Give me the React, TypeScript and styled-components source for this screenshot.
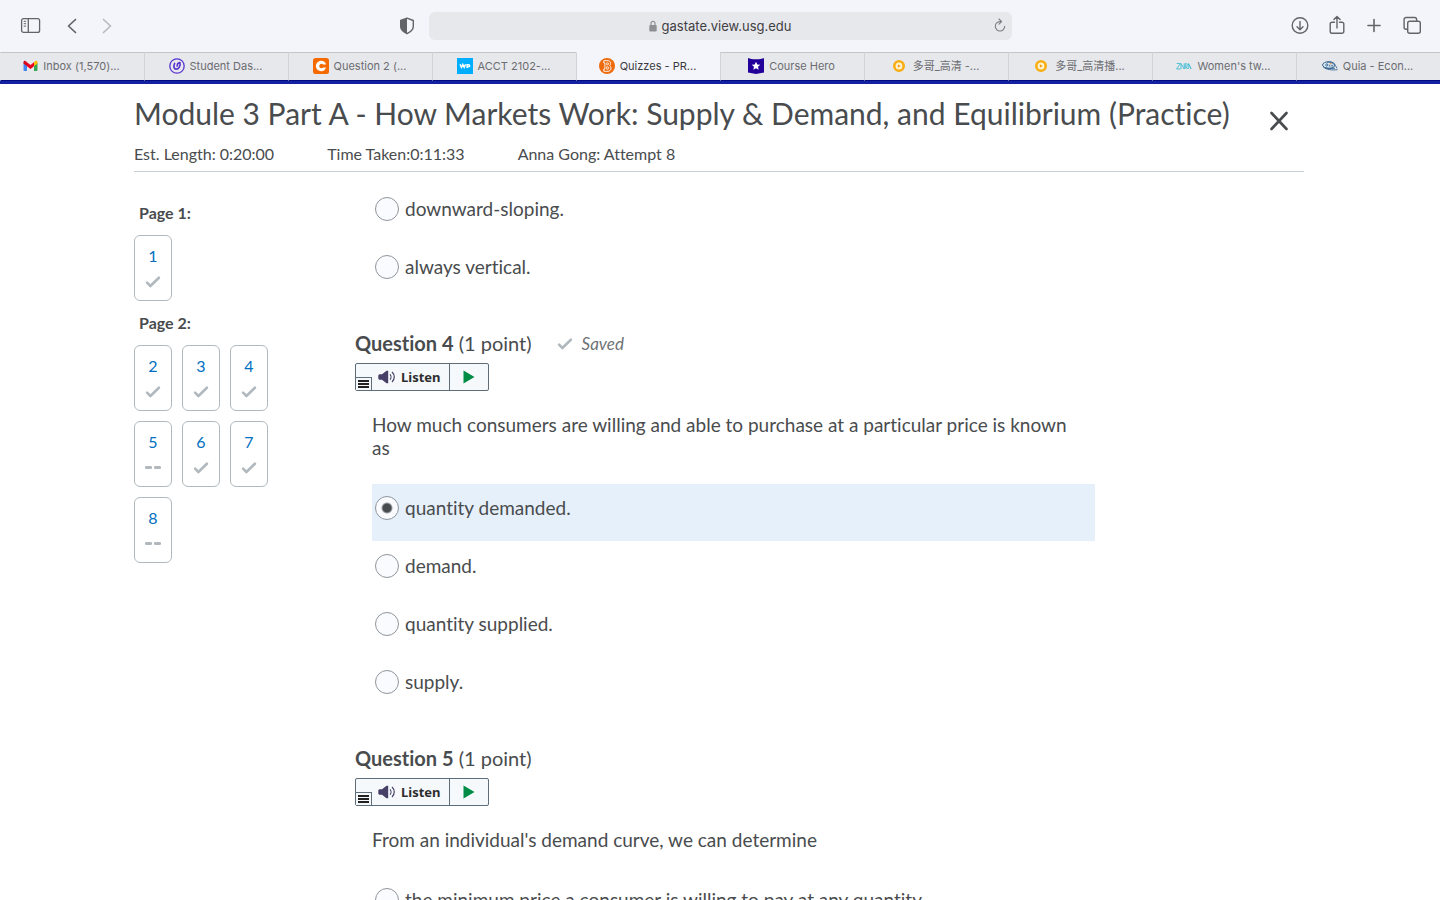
import React, { useState } from "react";
import styled, { createGlobalStyle, css } from "styled-components";

const GlobalStyle = createGlobalStyle`
  *, *::before, *::after { box-sizing: border-box; }
  body {
    margin: 0;
    background: #ffffff;
    color: #494c4e;
    font-family: Lato, "Liberation Sans", sans-serif;
    font-variant-ligatures: none;
  }
  button, input { font: inherit; color: inherit; }
`;

const uiFont = `Inter, "Liberation Sans", "Noto Sans CJK SC", sans-serif`;

const Window = styled.div`
  display: flex;
  flex-direction: column;
  height: 100vh;
  overflow: hidden;
`;

/* ---------- browser chrome ---------- */

const Toolbar = styled.header`
  display: grid;
  grid-template-columns: minmax(0, 1fr) minmax(0, 583px) minmax(0, 1fr);
  align-items: center;
  height: 52px;
  flex: none;
  background: #f4f5fa;
  color: #636468;
  font-family: ${uiFont};
`;

const ToolGroup = styled.div<{ $side: "left" | "right" }>`
  display: flex;
  align-items: center;
  padding: ${(p) => (p.$side === "left" ? "0 13px 0 19px" : "0 16px 0 0")};
  justify-content: ${(p) => (p.$side === "left" ? "flex-start" : "flex-end")};
  gap: ${(p) => (p.$side === "left" ? "18px" : "15px")};
`;

const IconButton = styled.button<{ $dim?: boolean; $push?: boolean }>`
  display: flex;
  padding: 0;
  border: 0;
  background: none;
  color: ${(p) => (p.$dim ? "#b9babe" : "inherit")};
  ${(p) => p.$push && css`margin-left: auto;`}
  svg { display: block; }
`;

const AddressBar = styled.div`
  display: grid;
  grid-template-columns: 24px 1fr 24px;
  align-items: center;
  height: 28px;
  border-radius: 6px;
  background: #e7e8ec;
`;

const Address = styled.div`
  grid-column: 2;
  display: flex;
  align-items: center;
  justify-content: center;
  gap: 5px;
  color: #3f4043;
  font-size: 13px;
  line-height: 16px;
`;

const TabStrip = styled.nav`
  display: flex;
  flex: none;
  height: 32px;
  border-bottom: 3px solid #1420a2;
  background: #e7e8ec;
  font-family: ${uiFont};
`;

const Tab = styled.a<{ $active?: boolean }>`
  display: flex;
  flex: 1 1 0;
  min-width: 0;
  align-items: center;
  justify-content: center;
  gap: 5px;
  padding: 0 2px 1px 0;
  border-top: 1px solid ${(p) => (p.$active ? "#f4f5fa" : "#c3c4c8")};
  border-left: 1px solid #d2d3d7;
  border-bottom: 1px solid #000a80;
  background: ${(p) => (p.$active ? "#f4f5fa" : "#e7e8ec")};
  color: ${(p) => (p.$active ? "#3a3b3e" : "#6b6c70")};
  font-size: 11px;
  line-height: 16px;
  text-decoration: none;
  white-space: nowrap;
  &:first-child { border-left-color: transparent; }
  svg { flex: none; }
`;

/* ---------- quiz page ---------- */

const Page = styled.div`
  display: flex;
  flex-direction: column;
  flex: 1;
  min-height: 0;
  width: 100%;
  max-width: 1232px;
  margin: 0 auto;
  padding: 0 32px 0 30px;
`;

const QuizHeader = styled.header`
  flex: none;
  padding: 10px 0 7px;
  border-bottom: 1px solid #c4d0d9;
`;

const TitleRow = styled.div`
  display: flex;
  align-items: center;
  justify-content: space-between;
  padding-right: 15px;
`;

const Title = styled.h1`
  margin: 0;
  font-size: 30px;
  line-height: 38px;
  font-weight: 400;
`;

const CloseButton = styled(IconButton)`
  color: #494c4e;
  padding-top: 16px;
`;

const Meta = styled.div`
  display: flex;
  gap: 53px;
  margin-top: 12px;
  font-size: 16px;
  line-height: 20px;
`;

const Body = styled.div`
  display: flex;
  flex: 1;
  min-height: 0;
  overflow: hidden;
`;

const Sidebar = styled.nav`
  display: flex;
  flex-direction: column;
  flex: none;
  gap: 12px;
  width: 221px;
  padding-top: 31px;
`;

const PageLabel = styled.h2`
  margin: 0;
  padding-left: 5px;
  font-size: 16px;
  line-height: 20px;
  font-weight: 700;
`;

const Tiles = styled.div`
  display: grid;
  grid-template-columns: repeat(3, 38px);
  gap: 10px;
`;

const Tile = styled.a`
  display: flex;
  flex-direction: column;
  align-items: center;
  gap: 9px;
  height: 66px;
  padding-top: 10px;
  border: 1px solid #b1b9be;
  border-radius: 6px;
  color: #006fbf;
  font-size: 16px;
  line-height: 20px;
  text-decoration: none;
`;

const Questions = styled.main`
  flex: 1;
  min-width: 0;
  max-width: 740px;
  padding-top: 12px;
`;

const Question = styled.section`
  padding-bottom: 32px;
`;

const QuestionHead = styled.div`
  display: flex;
  align-items: center;
  gap: 25px;
`;

const QuestionTitle = styled.h2`
  margin: 0;
  font-size: 20px;
  line-height: 23px;
  font-weight: 400;
`;

const Saved = styled.span`
  display: flex;
  align-items: center;
  gap: 9px;
  color: #6e7376;
  font-size: 17px;
  line-height: 20px;
  font-style: italic;
`;

const ListenBar = styled.div`
  display: flex;
  width: 134px;
  height: 28px;
  margin-top: 8px;
  border: 1px solid #5f6d78;
  border-radius: 2px;
  background: #f5f9fc;
`;

const ListenMenu = styled.button`
  display: flex;
  align-self: flex-end;
  width: 16px;
  height: 13px;
  padding: 1px 0 0 2px;
  border: 1px solid #5f6d78;
  border-width: 1px 1px 0 0;
  background: #f5f9fc;
`;

const ListenButton = styled.button`
  display: flex;
  flex: 1;
  align-items: center;
  gap: 5px;
  padding: 0 0 0 6px;
  border: 0;
  border-right: 1px solid #5f6d78;
  background: none;
  color: #2d2d2d;
  font-family: "Noto Sans", "Open Sans", sans-serif;
  font-size: 13px;
  line-height: 18px;
  font-weight: 700;
`;

const PlayButton = styled.button`
  display: flex;
  align-items: center;
  justify-content: center;
  width: 38px;
  padding: 0;
  border: 0;
  background: none;
`;

const Prompt = styled.p`
  margin: 22px 0 24px 17px;
  padding-right: 8px;
  font-size: 19px;
  line-height: 23px;
`;

const Answers = styled.div`
  margin-left: 17px;
`;

const Answer = styled.label<{ $selected: boolean }>`
  display: flex;
  align-items: flex-start;
  gap: 6px;
  height: 58px;
  padding: 12px 3px 0;
  border-top: 1px solid transparent;
  background: ${(p) => (p.$selected ? "#e6f0fb" : "transparent")};
  background-clip: padding-box;
  font-size: 19px;
  line-height: 24px;
`;

const Radio = styled.input`
  appearance: none;
  flex: none;
  width: 24px;
  height: 24px;
  margin: 0;
  border: 1px solid #8f959a;
  border-radius: 50%;
  background: #f9fbff;
  &:checked {
    background: radial-gradient(circle, #494c4e 4px, #f9fbff 6px);
  }
`;

/* ---------- drawings ---------- */

const Check = () => (
  <svg width="16" height="14" viewBox="0 0 16 14" fill="none" stroke="#b1b9be" strokeWidth="2.6" strokeLinecap="round" strokeLinejoin="round" aria-hidden="true">
    <path d="M2.100 7.700 5.400 11 13.900 2.700" />
  </svg>
);

const Dashes = () => (
  <svg width="16" height="14" viewBox="0 0 16 14" fill="#b1b9be" aria-hidden="true">
    <rect x="0" y="5" width="7" height="3" rx="1.2" />
    <rect x="9" y="5" width="7" height="3" rx="1.2" />
  </svg>
);

const GmailIcon = () => (
  <svg width="15" height="16" viewBox="0 0 15 16" aria-hidden="true">
    <path d="M0.5 4.5V12a1 1 0 0 0 1 1H4V7.5z" fill="#4285f4" />
    <path d="M14.5 4.5V12a1 1 0 0 1-1 1H11V7.5z" fill="#34a853" />
    <path d="M11 4.2 12.2 3.200c1-.8 2.300-.1 2.300 1.100V5.600L11 8.200z" fill="#fbbc04" />
    <path d="M4 4.200 7.500 6.900 11 4.200v4L7.500 10.900 4 8.200z" fill="#ea0020" />
    <path d="M.5 5.600V4.300c0-1.200 1.300-1.900 2.300-1.100L4 4.200v4z" fill="#d8061c" />
  </svg>
);

const StudentIcon = () => (
  <svg width="16" height="16" viewBox="0 0 16 16" fill="none" stroke="#5a35d0" aria-hidden="true">
    <circle cx="8" cy="8" r="7.200" strokeWidth="1.300" />
    <path d="M5.600 5.500C4.300 8.500 4.900 11.200 7.200 11.200c2.500 0 4.500-3.500 3.700-6.700L8.700 5.600 8.100 8" strokeWidth="1.700" strokeLinecap="round" strokeLinejoin="round" />
  </svg>
);

const CheggIcon = () => (
  <svg width="16" height="16" viewBox="0 0 16 16" aria-hidden="true">
    <rect width="16" height="16" rx="2.500" fill="#f56a00" />
    <path d="M13 6.500h-3C9.600 5.900 9 5.700 8.400 5.700 7.100 5.700 6.300 6.700 6.300 8s.8 2.300 2.100 2.300c.7 0 1.200-.2 1.600-.8h3c-.6 2.400-2.400 3.700-4.600 3.700C5.300 13.200 2.900 10.900 2.900 8s2.400-5.200 5.500-5.200c2.300 0 4 1.300 4.600 3.700z" fill="#fff" />
  </svg>
);

const WileyIcon = () => (
  <svg width="16" height="16" viewBox="0 0 16 16" aria-hidden="true">
    <rect width="16" height="16" fill="#00aeff" />
    <g fill="none" stroke="#fff" strokeWidth="1.400">
      <path d="M3 6.200 4.400 9.400 5.800 6.400 7.200 9.400 8.600 6.200" />
      <path d="M10.100 10V6.700h1.500a1.100 1.100 0 0 1 0 2.200h-1.500" />
    </g>
  </svg>
);

const BrightspaceIcon = () => (
  <svg width="16" height="16" viewBox="0 0 16 16" aria-hidden="true">
    <circle cx="8" cy="8" r="8" fill="#ed6b0c" />
    <g fill="none" stroke="#fff" strokeLinejoin="round">
      <path d="M4.800 2.700H9c2.700 0 3.300 3.300 1.700 4.900 2.200 1.600 1.500 5.700-1.700 5.700H4.800V11h1.100V5H4.800z" strokeWidth=".9" />
      <path d="M7.700 4.800h1c1.200 0 1.200 2 0 2h-1zM7.700 8.800h1.200c1.300 0 1.300 2.400 0 2.400H7.700z" strokeWidth=".8" />
    </g>
  </svg>
);

const CourseHeroIcon = () => (
  <svg width="16" height="16" viewBox="0 0 16 16" aria-hidden="true">
    <path d="M0 0c2 1 4.500 1.300 8 1.300S14 1 16 0v14.500L8 16 0 14.500z" fill="#220099" />
    <path d="m8 3.700 1.300 2.800 3 .3-2.300 2 .7 3L8 10.300l-2.700 1.500.7-3-2.300-2 3-.3z" fill="#fff" />
  </svg>
);

const VideoIcon = () => (
  <svg width="16" height="16" viewBox="0 0 16 16" aria-hidden="true">
    <ellipse cx="7" cy="8" rx="4.700" ry="4.800" fill="#fff3cf" stroke="#f8ae12" strokeWidth="2.600" />
    <path d="m5.900 6.200 2.700 1.800-2.700 1.800z" fill="#f39a14" />
  </svg>
);

const ZaraIcon = () => (
  <svg width="16" height="16" viewBox="0 0 16 16" fill="none" stroke="#40bcd2" aria-hidden="true">
    <path d="M.7 5.500h3.600L.6 11h4M5 11V5.500L8.200 11V5.500M9.200 11V5.500c3 0 2.300 2.600.4 2.600L11.500 11M12.200 11V5.500" strokeWidth=".9" />
    <path d="m12.300 5.500 2.900 5.500" strokeWidth="1.200" />
  </svg>
);

const QuiaIcon = () => (
  <svg width="16" height="16" viewBox="0 0 16 16" fill="none" aria-hidden="true">
    <ellipse cx="6.800" cy="7" rx="6.200" ry="3.300" stroke="#2f608e" strokeWidth="1" fill="#dce8f2" />
    <path d="M1 8.500c3 3.500 9 3.700 14.500 3.200M5 4.300c4-.8 8 1.500 10 6M3 9.700c3 .8 6 .9 10 .6" stroke="#2f608e" strokeWidth=".9" />
    <path d="M4 6.200c-1 2 1.500 2.500 1.700.9S4.500 5.600 4 6.200M7.300 6.700v1.700M9 8.700c0-2 2-2 2 0" stroke="#2f608e" strokeWidth=".9" />
    <circle cx="8.700" cy="5.600" r=".9" fill="#e59a4a" />
  </svg>
);

const Speaker = () => (
  <svg width="18" height="14" viewBox="0 0 18 14" aria-hidden="true">
    <path d="M1.500 4.200H4L8.500.8h1.700v12.400H8.500L4 9.800H1.500A1.500 1.500 0 0 1 .3 8.500v-3A1.500 1.500 0 0 1 1.500 4.200z" fill="#463f68" />
    <path d="M12 4.300c1.300 1.400 1.300 4 0 5.400M14 2c3 2.700 3 7.300 0 10" fill="none" stroke="#463f68" strokeWidth="1.200" />
  </svg>
);

/* ---------- data ---------- */

const tabs = [
  { label: "Inbox (1,570)...", Icon: GmailIcon },
  { label: "Student Das...", Icon: StudentIcon },
  { label: "Question 2 (...", Icon: CheggIcon },
  { label: "ACCT 2102-...", Icon: WileyIcon },
  { label: "Quizzes - PR...", Icon: BrightspaceIcon, active: true },
  { label: "Course Hero", Icon: CourseHeroIcon },
  { label: "多哥_高清 -...", Icon: VideoIcon },
  { label: "多哥_高清播...", Icon: VideoIcon },
  { label: "Women's tw...", Icon: ZaraIcon },
  { label: "Quia - Econ...", Icon: QuiaIcon },
];

const quizPages = [
  { name: "Page 1:", items: [{ n: 1, saved: true }] },
  {
    name: "Page 2:",
    items: [2, 3, 4, 5, 6, 7, 8].map((n) => ({ n, saved: n !== 5 && n !== 8 })),
  },
];

/* ---------- parts ---------- */

function AnswerList({ name, options, initial }: { name: string; options: string[]; initial?: string }) {
  const [value, setValue] = useState(initial);
  return (
    <Answers role="radiogroup" aria-label={name}>
      {options.map((option) => (
        <Answer key={option} $selected={option === value}>
          <Radio type="radio" name={name} checked={option === value} onChange={() => setValue(option)} />
          {option}
        </Answer>
      ))}
    </Answers>
  );
}

function Listen() {
  return (
    <ListenBar>
      <ListenMenu aria-label="Reader menu">
        <svg width="11" height="10" viewBox="0 0 11 10" fill="#222" aria-hidden="true">
          <path d="M0 1h11v2H0zM0 4h11v2H0zM0 7h11v2H0z" />
        </svg>
      </ListenMenu>
      <ListenButton>
        <Speaker />
        Listen
      </ListenButton>
      <PlayButton aria-label="Play">
        <svg width="12" height="14" viewBox="0 0 12 14" aria-hidden="true">
          <path d="M.5.500 11.500 7 .5 13.500z" fill="#008c45" />
        </svg>
      </PlayButton>
    </ListenBar>
  );
}

export default function App() {
  return (
    <Window>
      <GlobalStyle />
      <Toolbar>
        <ToolGroup $side="left">
          <IconButton aria-label="Sidebar">
            <svg width="24" height="20" viewBox="0 0 24 20" fill="none" stroke="currentColor" strokeWidth="1.300">
              <rect x="2.600" y="2.600" width="18" height="13.800" rx="2" />
              <path d="M9.300 2.600v13.800" />
              <path d="M4.700 5.300h2.400M4.700 7.700h2.400M4.700 10.100h2.400" strokeWidth="1" />
            </svg>
          </IconButton>
          <IconButton aria-label="Back">
            <svg width="22" height="20" viewBox="0 0 22 20" fill="none" stroke="currentColor" strokeWidth="1.700" strokeLinecap="round" strokeLinejoin="round">
              <path d="M14.500 3.500 7.500 10l7 6.500" />
            </svg>
          </IconButton>
          <IconButton aria-label="Forward" $dim>
            <svg width="14" height="20" viewBox="0 0 14 20" fill="none" stroke="currentColor" strokeWidth="1.700" strokeLinecap="round" strokeLinejoin="round">
              <path d="M2.500 3.500 9.500 10l-7 6.500" />
            </svg>
          </IconButton>
          <IconButton aria-label="Privacy report" $push>
            <svg width="18" height="20" viewBox="0 0 18 20">
              <path d="M9 2.200 15.300 4.500v6c0 3.200-2.600 5.300-6.300 7.200-3.700-1.900-6.300-4-6.300-7.200v-6z" fill="none" stroke="currentColor" strokeWidth="1.400" strokeLinejoin="round" />
              <path d="M9 2.200v15.500c-3.700-1.900-6.300-4-6.300-7.200v-6z" fill="currentColor" />
            </svg>
          </IconButton>
        </ToolGroup>
        <AddressBar>
          <Address>
            <svg width="8" height="12" viewBox="0 0 8 12" aria-hidden="true">
              <path d="M2 6V3.300a2 2 0 0 1 4 0V6" fill="none" stroke="#8f9094" strokeWidth="1.200" />
              <rect x=".3" y="5" width="7.400" height="6.500" rx="1" fill="#8f9094" />
            </svg>
            gastate.view.usg.edu
          </Address>
          <IconButton aria-label="Reload">
            <svg width="24" height="20" viewBox="0 0 24 20" fill="none" stroke="#7b7c80" strokeWidth="1.100" strokeLinecap="round" strokeLinejoin="round">
              <path d="M13.500 5.600H12A4.700 4.700 0 1 0 16.700 10.300M11 3l2.600 2.600L11 8.200" />
            </svg>
          </IconButton>
        </AddressBar>
        <ToolGroup $side="right">
          <IconButton aria-label="Downloads">
            <svg width="22" height="22" viewBox="0 0 22 22" fill="none" stroke="currentColor" strokeWidth="1.400" strokeLinecap="round" strokeLinejoin="round">
              <circle cx="11" cy="10.500" r="7.800" />
              <path d="M11 6.500v8M8 11.700l3 3 3-3" />
            </svg>
          </IconButton>
          <IconButton aria-label="Share">
            <svg width="22" height="22" viewBox="0 0 22 22" fill="none" stroke="currentColor" strokeWidth="1.400" strokeLinecap="round" strokeLinejoin="round">
              <path d="M8.500 7.200H6A1.800 1.800 0 0 0 4.200 9v7.500A1.800 1.800 0 0 0 6 18.300h10a1.800 1.800 0 0 0 1.800-1.800V9A1.800 1.800 0 0 0 16 7.200h-2.500M11 13V1.500M7.900 4.500l3.100-3 3.100 3" />
            </svg>
          </IconButton>
          <IconButton aria-label="New tab">
            <svg width="22" height="22" viewBox="0 0 22 22" fill="none" stroke="currentColor" strokeWidth="1.600" strokeLinecap="round">
              <path d="M11 4.500v12M5 10.500h12" />
            </svg>
          </IconButton>
          <IconButton aria-label="Tab overview">
            <svg width="24" height="22" viewBox="0 0 24 22" fill="none" stroke="currentColor" strokeWidth="1.400" strokeLinejoin="round">
              <rect x="7.700" y="6.300" width="12.600" height="12" rx="2" />
              <path d="M7.700 14.300H6.100a2 2 0 0 1-2-2V4.500a2 2 0 0 1 2-2h8.500a2 2 0 0 1 2 2v1.800" />
            </svg>
          </IconButton>
        </ToolGroup>
      </Toolbar>

      <TabStrip aria-label="Tabs">
        {tabs.map(({ label, Icon, active }) => (
          <Tab key={label} href="#" $active={active}>
            <Icon />
            {label}
          </Tab>
        ))}
      </TabStrip>

      <Page>
        <QuizHeader>
          <TitleRow>
            <Title>Module 3 Part A - How Markets Work: Supply &amp; Demand, and Equilibrium (Practice)</Title>
            <CloseButton aria-label="Close">
              <svg width="20" height="20" viewBox="0 0 20 20" fill="none" stroke="currentColor" strokeWidth="2.600" strokeLinecap="round">
                <path d="M2.500 2 17.500 18M17.500 2 2.500 18" />
              </svg>
            </CloseButton>
          </TitleRow>
          <Meta>
            <span>Est. Length: 0:20:00</span>
            <span>Time Taken:0:11:33</span>
            <span>Anna Gong: Attempt 8</span>
          </Meta>
        </QuizHeader>

        <Body>
          <Sidebar aria-label="Quiz pages">
            {quizPages.map((page) => (
              <React.Fragment key={page.name}>
                <PageLabel>{page.name}</PageLabel>
                <Tiles>
                  {page.items.map((item) => (
                    <Tile key={item.n} href="#">
                      {item.n}
                      {item.saved ? <Check /> : <Dashes />}
                    </Tile>
                  ))}
                </Tiles>
              </React.Fragment>
            ))}
          </Sidebar>

          <Questions>
            <Question>
              <AnswerList name="Question 3" options={["downward-sloping.", "always vertical."]} />
            </Question>

            <Question>
              <QuestionHead>
                <QuestionTitle><b>Question 4</b> (1 point)</QuestionTitle>
                <Saved><Check />Saved</Saved>
              </QuestionHead>
              <Listen />
              <Prompt>How much consumers are willing and able to purchase at a particular price is known as</Prompt>
              <AnswerList
                name="Question 4"
                options={["quantity demanded.", "demand.", "quantity supplied.", "supply."]}
                initial="quantity demanded."
              />
            </Question>

            <Question>
              <QuestionHead>
                <QuestionTitle><b>Question 5</b> (1 point)</QuestionTitle>
              </QuestionHead>
              <Listen />
              <Prompt>From an individual's demand curve, we can determine</Prompt>
              <AnswerList name="Question 5" options={["the minimum price a consumer is willing to pay at any quantity."]} />
            </Question>
          </Questions>
        </Body>
      </Page>
    </Window>
  );
}
